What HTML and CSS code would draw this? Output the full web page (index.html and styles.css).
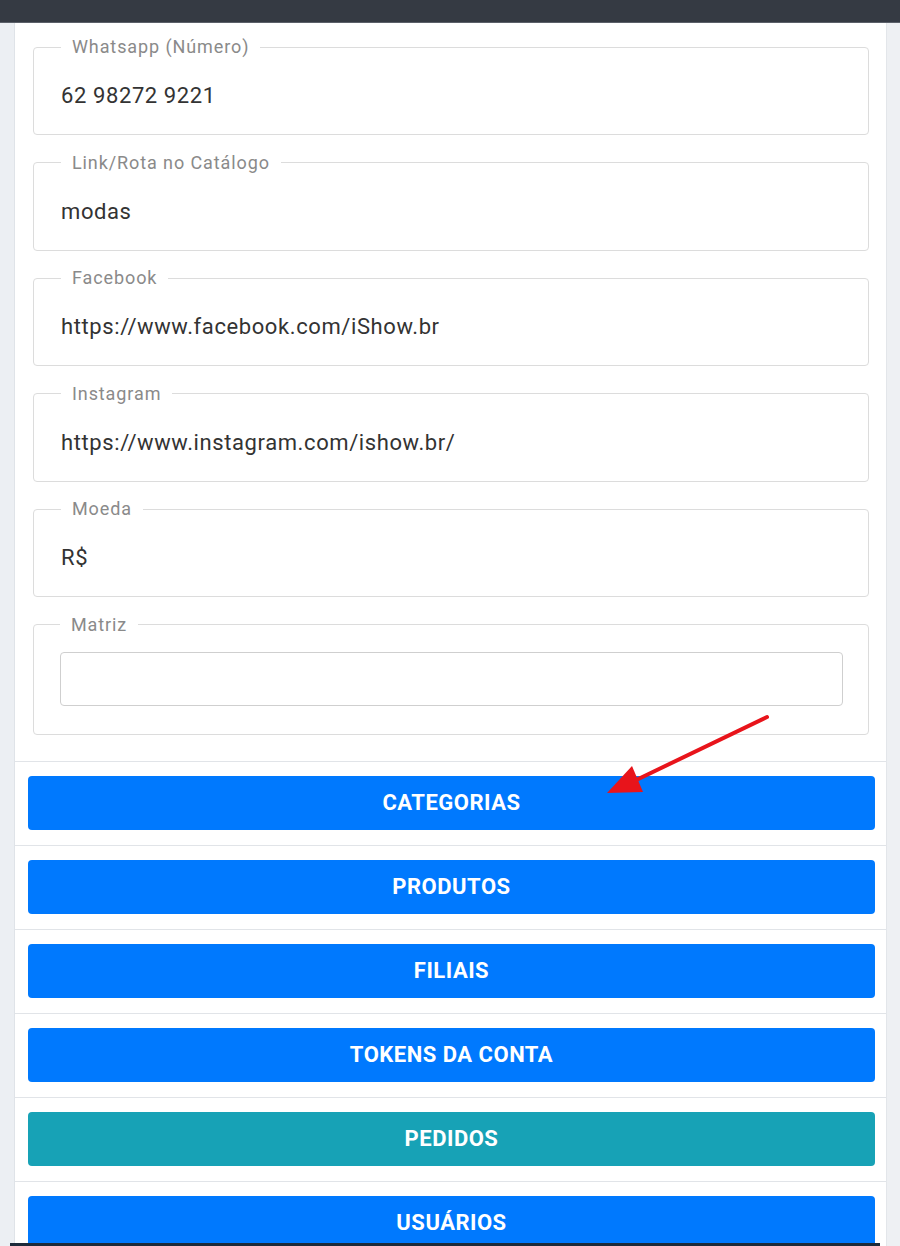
FILE: index.html
```html
<!DOCTYPE html>
<html lang="pt-BR">
<head>
<meta charset="utf-8">
<title>Configurações</title>
<link rel="stylesheet" href="styles.css">
</head>
<body>
<div class="topbar"></div>
<div class="layout">
  <aside class="side side-left"></aside>
  <main class="panel">
    <section class="form">
      <fieldset class="field">
        <legend>Whatsapp (Número)</legend>
        <div class="value">62 98272 9221</div>
      </fieldset>
      <fieldset class="field">
        <legend>Link/Rota no Catálogo</legend>
        <div class="value">modas</div>
      </fieldset>
      <fieldset class="field">
        <legend>Facebook</legend>
        <div class="value">https://www.facebook.com/iShow.br</div>
      </fieldset>
      <fieldset class="field">
        <legend>Instagram</legend>
        <div class="value">https://www.instagram.com/ishow.br/</div>
      </fieldset>
      <fieldset class="field">
        <legend>Moeda</legend>
        <div class="value">R$</div>
      </fieldset>
      <fieldset class="field field-input">
        <legend>Matriz</legend>
        <input class="input" type="text" value="">
      </fieldset>
    </section>
    <ul class="actions">
      <li class="action"><button class="btn btn-primary">CATEGORIAS</button></li>
      <li class="action"><button class="btn btn-primary">PRODUTOS</button></li>
      <li class="action"><button class="btn btn-primary">FILIAIS</button></li>
      <li class="action"><button class="btn btn-primary">TOKENS DA CONTA</button></li>
      <li class="action"><button class="btn btn-info">PEDIDOS</button></li>
      <li class="action"><button class="btn btn-primary">USUÁRIOS</button></li>
    </ul>
  </main>
  <aside class="side side-right"></aside>
</div>
<svg class="arrow" width="900" height="1246" viewBox="0 0 900 1246" aria-hidden="true">
  <line x1="767" y1="717" x2="630" y2="783" stroke="#e8141b" stroke-width="4" stroke-linecap="round"/>
  <polygon points="607,793 632,766 643,792" fill="#e8141b"/>
</svg>
<div class="bottombar"></div>
</body>
</html>
```

FILE: styles.css
```css
* { box-sizing: border-box; }
html, body {
  margin: 0;
  padding: 0;
  height: 1246px;
  overflow: hidden;
  background: #ebeef2;
  font-family: Roboto, "Liberation Sans", Arial, sans-serif;
}
.topbar {
  height: 23px;
  background: #353a43;
  border-bottom: 1px solid #5b6069;
}
.layout {
  display: flex;
  align-items: stretch;
}
.side-left {
  width: 15px;
  flex: none;
  background: #eceff3;
  border-right: 1px solid #dfe3e8;
}
.side-right {
  flex: 1;
  background: #eef0f3;
  border-left: 1px solid #e3e6ea;
}
.panel {
  width: 871px;
  flex: none;
  background: #fff;
}
.form {
  padding: 14px 17px 26px 18px;
}
.field {
  margin: 0 0 17.6px;
  border: 1px solid #dcdcdc;
  border-radius: 4px;
  padding: 27px 26px 26px 27px;
  min-width: 0;
}
.field:last-child { margin-bottom: 0; }
.field legend {
  margin-left: 0;
  padding: 0 11px;
  font-size: 18px;
  line-height: 20px;
  letter-spacing: 0.9px;
  color: #8a8a8a;
}
.value {
  font-size: 22px;
  line-height: 24px;
  letter-spacing: 0.6px;
  color: #333;
}
.field-input {
  padding: 17px 25px 28px 26px;
}
.input {
  display: block;
  width: 100%;
  height: 54px;
  border: 1px solid #cfcfcf;
  border-radius: 4px;
  background: #fff;
  font: inherit;
}
.actions {
  list-style: none;
  margin: 0;
  padding: 0;
}
.action {
  border-top: 1px solid #e1e4e8;
  padding: 14px 11px 15px 13px;
}
.btn {
  display: block;
  width: 100%;
  height: 54px;
  border: none;
  border-radius: 4px;
  color: #fff;
  font-family: Roboto, "Liberation Sans", Arial, sans-serif;
  font-weight: 700;
  font-size: 22px;
  letter-spacing: 0.5px;
  cursor: pointer;
}
.btn-primary { background: #0079fe; }
.btn-info { background: #17a2b6; }
.arrow {
  position: absolute;
  left: 0;
  top: 0;
  pointer-events: none;
}
.bottombar {
  position: fixed;
  left: 10px;
  right: 20px;
  bottom: 0;
  height: 3px;
  background: #1d2a3a;
}
```
